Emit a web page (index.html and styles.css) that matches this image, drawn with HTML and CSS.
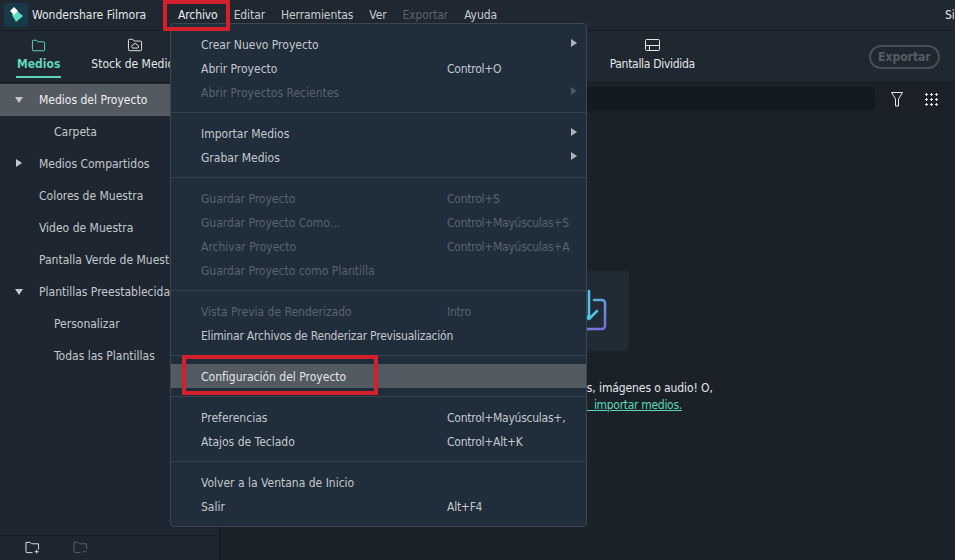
FILE: index.html
```html
<!DOCTYPE html>
<html lang="es">
<head>
    <meta charset="UTF-8">
    <meta name="viewport" content="width=device-width, initial-scale=1.0">
    <title>Wondershare Filmora</title>
    <link rel="stylesheet" href="styles.css">
</head>
<body>

    <header class="titlebar">
        <svg class="logo" width="24" height="24" viewBox="0 0 24 24">
            <rect width="24" height="24" rx="4" fill="#17394a"/>
            <path d="M8 12l4-5 7 6-7 6z" fill="#5fdcc0"/>
            <path d="M6 8l4-4 4 4-4 4z" fill="#fff"/>
        </svg>
        <span class="app-name">Wondershare Filmora</span>
        <nav class="menubar">
            <span>Archivo</span>
            <span>Editar</span>
            <span>Herramientas</span>
            <span>Ver</span>
            <span class="dim">Exportar</span>
            <span>Ayuda</span>
        </nav>
        <span class="doc-title">Sin título</span>
    </header>

    <div class="tabbar">
        <div class="tab active">
            <div class="tab-icon"><svg width="15" height="13" viewBox="0 0 18 16" fill="none" stroke="currentColor" stroke-width="1.200"><path d="M2.5 14.5h13a1 1 0 0 0 1-1v-9a1 1 0 0 0-1-1H8L6.5 1.5h-4a1 1 0 0 0-1 1v11a1 1 0 0 0 1 1z"/></svg></div>
            <span>Medios</span>
        </div>
        <div class="tab">
            <div class="tab-icon"><svg width="16" height="14" viewBox="0 0 18 16" fill="none" stroke="currentColor" stroke-width="1.100"><path d="M2.5 14.5h13a1 1 0 0 0 1-1v-9a1 1 0 0 0-1-1H8L6.5 1.5h-4a1 1 0 0 0-1 1v11a1 1 0 0 0 1 1z"/><path d="M6.5 11.5h5a1.5 1.5 0 0 0 .2-3 2.7 2.7 0 0 0-5.200-.3 1.700 1.700 0 0 0 0 3.300z"/></svg></div>
            <span>Stock de Medios</span>
        </div>
        <div class="tab-spacer"></div>
        <div class="tab tab-split">
            <div class="tab-icon"><svg width="15" height="12" viewBox="0 0 15 12" fill="none" stroke="currentColor"><rect x=".5" y=".5" width="14" height="11" rx="1"/><path d="M.5 6.500h14M4.500 6.500v5"/></svg></div>
            <span>Pantalla Dividida</span>
        </div>
        <button class="export-btn">Exportar</button>
    </div>

    <div class="workspace">
        <aside class="sidebar">
            <ul class="tree">
                <li class="selected"><i class="arrow down"></i>Medios del Proyecto</li>
                <li class="sub">Carpeta</li>
                <li><i class="arrow right"></i>Medios Compartidos</li>
                <li>Colores de Muestra</li>
                <li>Video de Muestra</li>
                <li>Pantalla Verde de Muestra</li>
                <li><i class="arrow down"></i>Plantillas Preestablecidas</li>
                <li class="sub">Personalizar</li>
                <li class="sub">Todas las Plantillas</li>
            </ul>
            <div class="sidebar-foot">
                <svg width="15" height="13" viewBox="0 0 16 14" fill="none" stroke="#e6e8ea"><path d="M8 12.500H2a1 1 0 0 1-1-1v-10h4.500L7 3h7.500v6M12.500 9.500v4M10.500 11.500h4"/></svg>
                <svg width="15" height="13" viewBox="0 0 16 14" fill="none" stroke="#5b6269"><path d="M8 12.500H2a1 1 0 0 1-1-1v-10h4.500L7 3h7.500v6M10.500 11.500h4"/></svg>
            </div>
        </aside>

        <main class="library">
            <div class="search-row">
                <div class="search"></div>
                <svg width="12" height="15" viewBox="0 0 12 15" fill="none" stroke="#e6e8ea"><path d="M.5 .5h11L7.500 7v7h-3V7z"/></svg>
                <div class="dots"></div>
            </div>
            <div class="empty">
                <div class="drop-box">
                    <svg width="50" height="50" viewBox="0 0 50 50" fill="none" stroke-width="2.500" stroke-linecap="round" stroke-linejoin="round">
                        <defs>
                            <linearGradient id="grad" x1="0" y1="0" x2="1" y2="1">
                                <stop offset="0" stop-color="#4fd0e0"/>
                                <stop offset="1" stop-color="#7a68e0"/>
                            </linearGradient>
                        </defs>
                        <path d="M18 14H11a3 3 0 0 0-3 3v23a3 3 0 0 0 3 3h29a3 3 0 0 0 3-3V17a3 3 0 0 0-3-3h-8" stroke="url(#grad)"/>
                        <path d="M27 5v28M19 26l8 7 8-8" stroke="#4fc4e8"/>
                    </svg>
                </div>
                <p class="hint">¡Arrastra y suelta videos, imágenes o audio! O,</p>
                <a class="hint-link">Haga clic aquí para&nbsp;&nbsp;importar medios.</a>
            </div>
        </main>
    </div>

    <div class="menu">
        <div class="menu-group">
            <div class="item">Crear Nuevo Proyecto<i class="sub-arrow"></i></div>
            <div class="item">Abrir Proyecto<kbd>Control+O</kbd></div>
            <div class="item off">Abrir Proyectos Recientes<i class="sub-arrow"></i></div>
        </div>
        <div class="menu-group">
            <div class="item">Importar Medios<i class="sub-arrow"></i></div>
            <div class="item">Grabar Medios<i class="sub-arrow"></i></div>
        </div>
        <div class="menu-group">
            <div class="item off">Guardar Proyecto<kbd>Control+S</kbd></div>
            <div class="item off">Guardar Proyecto Como...<kbd>Control+Mayúsculas+S</kbd></div>
            <div class="item off">Archivar Proyecto<kbd>Control+Mayúsculas+A</kbd></div>
            <div class="item off">Guardar Proyecto como Plantilla</div>
        </div>
        <div class="menu-group">
            <div class="item off">Vista Previa de Renderizado<kbd>Intro</kbd></div>
            <div class="item tight">Eliminar Archivos de Renderizar Previsualización</div>
        </div>
        <div class="menu-group">
            <div class="item hover">Configuración del Proyecto</div>
        </div>
        <div class="menu-group">
            <div class="item">Preferencias<kbd>Control+Mayúsculas+,</kbd></div>
            <div class="item">Atajos de Teclado<kbd>Control+Alt+K</kbd></div>
        </div>
        <div class="menu-group">
            <div class="item">Volver a la Ventana de Inicio</div>
            <div class="item">Salir<kbd>Alt+F4</kbd></div>
        </div>
    </div>

    <div class="mark mark-archivo"></div>
    <div class="mark mark-config"></div>

</body>
</html>
```

FILE: styles.css
```css
* {
    box-sizing: border-box;
}

body {
    font-family: "DejaVu Sans Condensed", "DejaVu Sans", sans-serif;
    font-stretch: condensed;
    font-size: 12px;
    margin: 0;
    width: 955px;
    height: 560px;
    overflow: hidden;
    display: flex;
    flex-direction: column;
    position: relative;
    background-color: #1a2129;
    color: #d8dadc;
}

.titlebar {
    height: 31px;
    display: flex;
    align-items: center;
    padding-left: 4px;
    background-color: #1f2731;
    border-bottom: 1px solid #151b21;
    flex: none;
}

.logo {
    flex: none;
}

.app-name {
    margin-left: 4px;
    flex: 0 0 146px;
    white-space: nowrap;
    color: #e4e6e8;
}

.menubar {
    display: flex;
    gap: 16px;
    flex: 0 0 767px;
    letter-spacing: -0.1px;
    color: #c9ccd0;
}

.menubar span:first-child {
    color: #eceef0;
}

.menubar .dim {
    color: #5d646b;
}

.doc-title {
    color: #e4e6e8;
    white-space: nowrap;
}

.tabbar {
    height: 52px;
    display: flex;
    align-items: flex-start;
    padding-left: 16px;
    background-color: #1f2731;
    border-bottom: 1px solid #151b21;
    flex: none;
}

.tab {
    height: 47px;
    padding-top: 7px;
    display: flex;
    flex-direction: column;
    align-items: center;
    gap: 5px;
    color: #e4e6e8;
    white-space: nowrap;
}

.tab-icon {
    height: 14px;
    display: flex;
    align-items: center;
}

.tab-split {
    letter-spacing: -0.3px;
}

.tab.active {
    padding-left: 1px;
    padding-right: 1px;
    color: #5fd6b8;
    font-weight: 700;
    border-bottom: 2px solid #5fd6b8;
    margin-right: 30px;
}

.tab-spacer {
    width: 430px;
}

.export-btn {
    margin: 14px 0 0 174px;
    width: 71px;
    height: 24px;
    padding: 0;
    border: 2px solid #474e56;
    border-radius: 12px;
    background: none;
    color: #565d65;
    font-family: inherit;
    font-stretch: inherit;
    font-size: 12px;
    font-weight: 700;
}

.workspace {
    flex: 1;
    display: flex;
    min-height: 0;
}

.sidebar {
    width: 220px;
    display: flex;
    flex-direction: column;
    background-color: #1e2731;
    border-right: 1px solid #10151a;
    flex: none;
}

.tree {
    list-style: none;
    margin: 0;
    padding: 1px 0 0;
    flex: 1;
}

.tree li {
    height: 32px;
    line-height: 32px;
    padding-left: 39px;
    position: relative;
    white-space: nowrap;
    color: #c4c8cc;
}

.tree li.selected {
    background-color: #535a62;
    color: #eef0f1;
}

.tree li.sub {
    padding-left: 54px;
}

.arrow {
    position: absolute;
    width: 0;
    height: 0;
    border-style: solid;
    border-color: transparent;
}

.arrow.down {
    left: 15px;
    top: 13px;
    border-width: 6px 4.500px 0;
    border-top-color: #c4c8cc;
}

.arrow.right {
    left: 16px;
    top: 11px;
    border-width: 4.500px 0 4.500px 6px;
    border-left-color: #c4c8cc;
}

.sidebar-foot {
    height: 25px;
    display: flex;
    align-items: center;
    gap: 33px;
    padding: 0 0 2px 25px;
    border-top: 1px solid #151b21;
    flex: none;
}

.library {
    flex: 1;
    display: flex;
    flex-direction: column;
}

.search-row {
    height: 32px;
    display: flex;
    align-items: center;
    gap: 16px;
    padding: 0 17px 0 8px;
    flex: none;
}

.search {
    flex: 1;
    height: 24px;
    border-radius: 4px;
    background-color: #141a21;
}

.dots {
    width: 14px;
    height: 14px;
    margin-left: 5px;
    background-image: radial-gradient(circle, #e6e8ea 1px, transparent 1.300px);
    background-size: 5px 5px;
}

.empty {
    display: flex;
    flex-direction: column;
    align-items: center;
    padding-top: 156px;
}

.drop-box {
    width: 84px;
    height: 80px;
    margin-right: 1px;
    border-radius: 4px;
    background-color: #212b35;
    display: flex;
    align-items: center;
    justify-content: center;
}

.hint {
    margin: 29px 0 0;
    line-height: 17px;
    white-space: nowrap;
    letter-spacing: -0.1px;
    color: #e4e6e8;
}

.hint-link {
    margin-right: 4px;
    line-height: 17px;
    white-space: nowrap;
    letter-spacing: -0.3px;
    color: #5fd6b8;
    text-decoration: underline;
}

.menu {
    position: absolute;
    left: 170px;
    top: 23px;
    width: 417px;
    height: 504px;
    background-color: #202d3b;
    border: 1px solid #3b4650;
    border-radius: 4px;
}

.menu-group {
    padding: 8px 0;
    border-top: 1px solid #36424e;
}

.menu-group:first-child {
    border-top: 0;
}

.item {
    height: 24px;
    line-height: 26px;
    padding-left: 30px;
    position: relative;
    white-space: nowrap;
    color: #c4c8cc;
}

.item.tight {
    letter-spacing: -0.2px;
}

.item.off {
    color: #5a646e;
}

.item.hover {
    background-color: #535a62;
    color: #e4e6e8;
}

.item kbd {
    position: absolute;
    left: 276px;
    font-family: inherit;
    font-size: 12px;
    letter-spacing: -0.25px;
}

.sub-arrow {
    position: absolute;
    left: 400px;
    top: 7px;
    width: 0;
    height: 0;
    border-style: solid;
    border-color: transparent;
    border-width: 4.500px 0 4.500px 6px;
    border-left-color: #aeb3b8;
}

.item.off .sub-arrow {
    border-left-color: #4c5660;
}

.mark {
    position: absolute;
    border: 4px solid #d3202d;
}

.mark-archivo {
    left: 163px;
    top: 0;
    width: 67px;
    height: 31px;
}

.mark-config {
    left: 182px;
    top: 355px;
    width: 196px;
    height: 40px;
}
```
